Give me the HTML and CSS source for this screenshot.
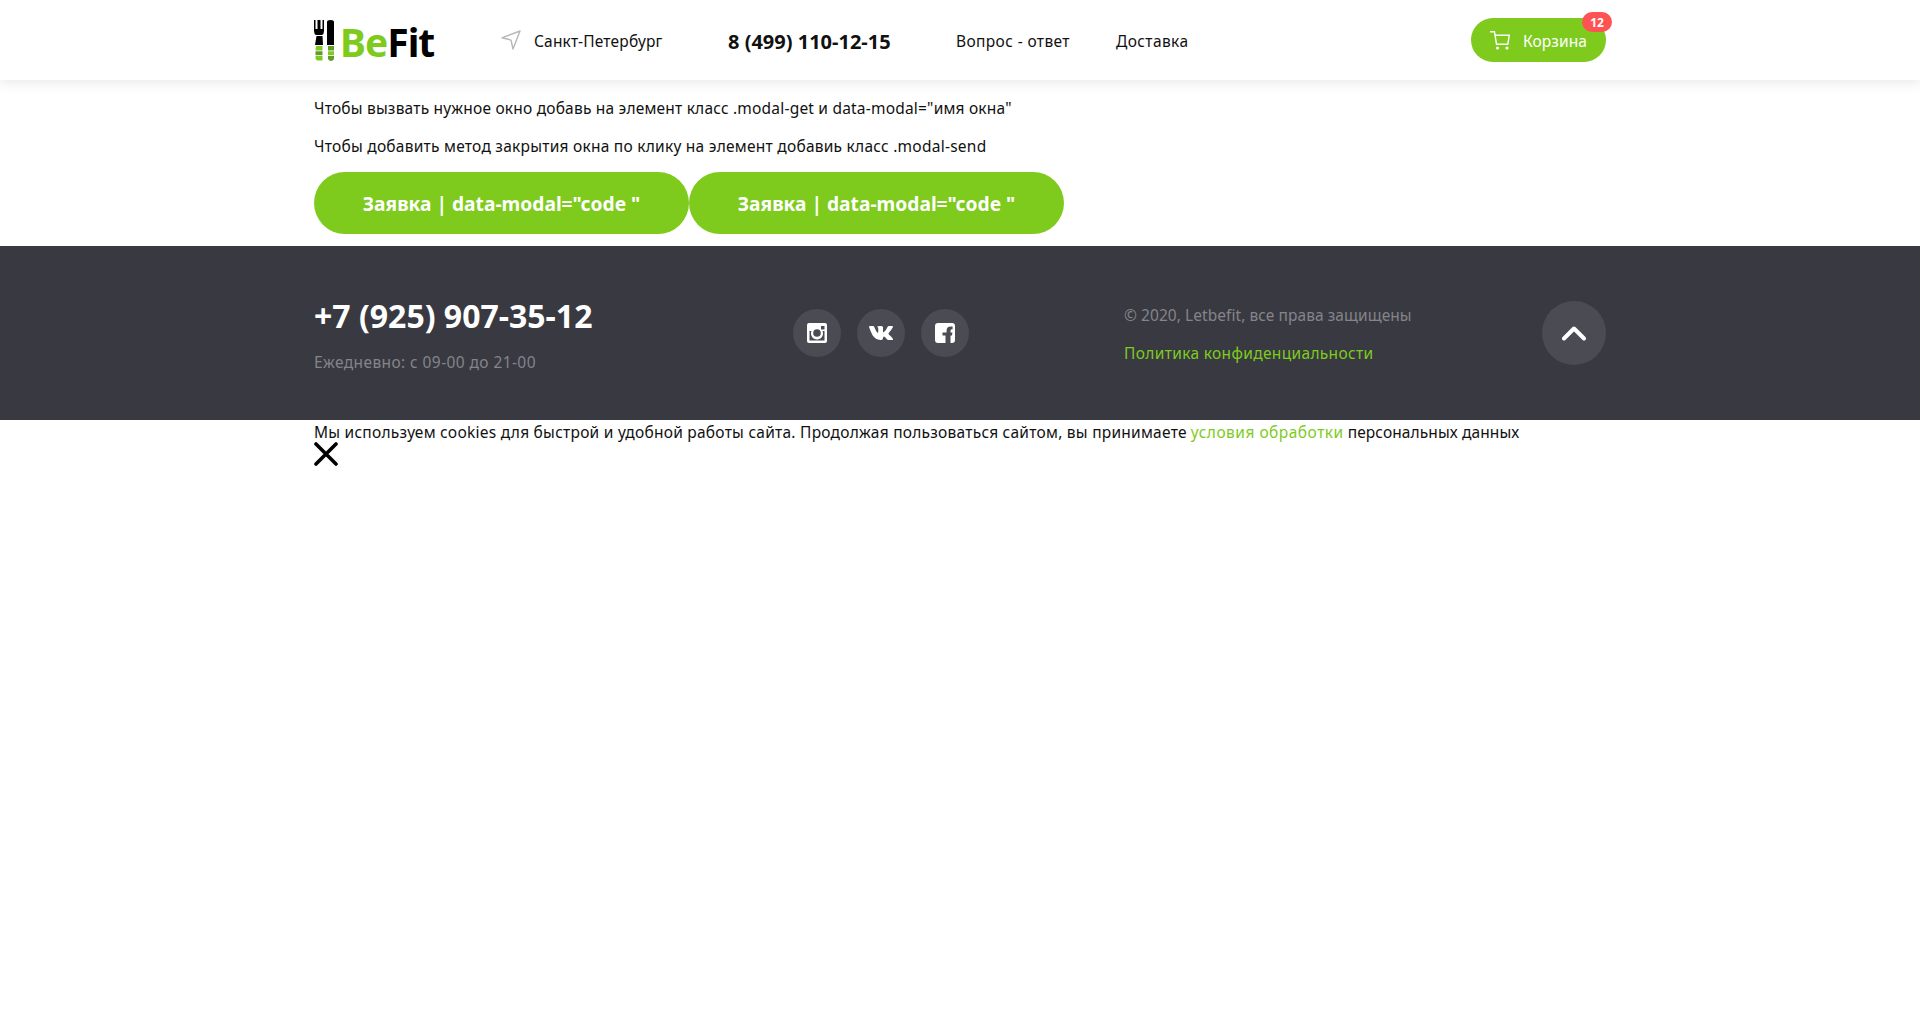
FILE: index.html
```html
<!DOCTYPE html>
<html lang="ru">
<head>
<meta charset="utf-8">
<title>BeFit</title>
<link rel="stylesheet" href="styles.css">
</head>
<body>
<header class="header">
  <div class="container header-row">
    <a class="logo">
      <svg class="logo-mark" width="20" height="41" viewBox="0 0 20 41">
        <path d="M0 0h1.500v9h2V0h3v9h2V0H10v11q0 3-2 4H2q-2-1-2-4z"/>
        <path d="M13 2q0-2 3.500-2T20 2v23h-7zM2.500 16h6l.5 9H1z"/>
        <path d="M2 26h6.500v4.500h-7zM1.500 36h7v4.500H4q-2 0-2.500-2zM14 31.200h6v4h-6z" fill="#7ecb1e"/>
        <path d="M1.500 31.200h7v4h-7zM14 26h6v4.500h-6zM14 36h6v3q-1 2-3 2t-3-2z" fill="#649a2c"/>
      </svg>
      <span class="logo-text"><span class="logo-be">Be</span>Fit</span>
    </a>
    <div class="city">
      <svg width="20" height="20" viewBox="0 0 20 20" fill="none" stroke="#b7b7b7" stroke-width="1.400" stroke-linejoin="round"><path d="M19 1 1 7.800l9 2.300L12 19z"/></svg>
      <span class="t city-name">Санкт-Петербург</span>
    </div>
    <a class="header-phone"><span class="t">8 (499) 110-12-15</span></a>
    <nav class="nav"><a class="t nav-faq">Вопрос - ответ</a><a class="t nav-delivery">Доставка</a></nav>
    <a class="cart">
      <svg width="20" height="19" viewBox="0 0 20 19" fill="none" stroke="#fff" stroke-width="1.400"><path d="M0 .8h4.500l2 12.400h11.300l1.500-9H5"/><circle cx="7.500" cy="17" r="1.600" fill="#fff" stroke="none"/><circle cx="17" cy="17" r="1.600" fill="#fff" stroke="none"/></svg>
      <span class="t cart-label">Корзина</span>
      <span class="badge">12</span>
    </a>
  </div>
</header>
<main class="container main">
  <p><span class="t p-one">Чтобы вызвать нужное окно добавь на элемент класс .modal-get и data-modal="имя окна"</span></p>
  <p><span class="t p-two">Чтобы добавить метод закрытия окна по клику на элемент добавиь класс .modal-send</span></p>
  <div class="buttons"><button class="btn"><span class="t">Заявка | data-modal="code "</span></button><button class="btn"><span class="t">Заявка | data-modal="code "</span></button></div>
</main>
<footer class="footer">
  <div class="container footer-row">
    <div class="contacts"><a class="footer-phone"><span class="t">+7 (925) 907-35-12</span></a><div class="hours"><span class="t">Ежедневно: с 09-00 до 21-00</span></div></div>
    <div class="social">
      <a class="circle"><svg width="20" height="20" viewBox="0 0 20 20"><path fill="#fff" fill-rule="evenodd" d="M2 0h16q2 0 2 2v16q0 2-2 2H2q-2 0-2-2V2q0-2 2-2zM14 3v3.500h3.500V3zM2.500 8v9.500h15V8h-2a6 6 0 1 1-11 0z"/><circle cx="10" cy="10" r="3.800" fill="#4b4b53"/></svg></a>
      <a class="circle"><svg width="24" height="14" viewBox="0 0 24 14"><path fill="#fff" d="M0 1q0-1 1-1h3q1 0 1.300 1 1.700 4.500 3.200 5.700.8.300.8-1V3q0-1.700-1.300-2.200Q9 0 11 0q3 0 3 1.200v4q0 1.600 1 .9Q17 4.500 18.500 1q.4-1 1.500-1h3q1.500 0 .7 1.500-1 2-4 5.500-.5.700.2 1.400 3 2.600 4 4.300.5 1.300-1 1.300h-3.400q-1 0-2-1.300-1.500-2-2.500-2.200-1 0-1 1.500 0 2-1.700 2-5.300.3-8.600-4.500Q2 6.500 0 1z"/></svg></a>
      <a class="circle"><svg width="20" height="20" viewBox="0 0 20 20"><path fill="#fff" d="M3 0h14q3 0 3 3v14q0 3-3 3h-1.500v-7.600H17l.4-3h-1.900V7.700q0-1.500 1.300-1.500h.8V3.400h-2q-4 0-4 4v2H7.500v3h3V20H3q-3 0-3-3V3q0-3 3-3z"/></svg></a>
    </div>
    <div class="legal"><div><span class="t copy">© 2020, Letbefit, все права защищены</span></div><a><span class="t policy">Политика конфиденциальности</span></a></div>
    <a class="circle up"><svg width="24" height="15" viewBox="0 0 24 15" fill="none" stroke="#fff" stroke-width="4" stroke-linecap="round" stroke-linejoin="round"><path d="m2 12.500 10-10 10 10"/></svg></a>
  </div>
</footer>
<div class="container cookies">
  <div class="cookies-text"><span class="t c-a">Мы используем cookies для быстрой и удобной работы сайта. Продолжая пользоваться сайтом, вы принимаете</span> <a class="t c-b">условия обработки</a> <span class="t c-c">персональных данных</span></div>
  <svg class="close" width="24" height="24" viewBox="0 0 24 24" stroke="#000" stroke-width="3.600" stroke-linecap="round"><path d="m2 2 20 20M22 2 2 22"/></svg>
</div>
</body>
</html>
```
FILE: styles.css
```css
* { box-sizing: border-box; }
body { margin: 0; font: 15.5px/19px "Noto Sans", sans-serif; color: #111; background: #fff; }
p { margin: 0; }
.t { white-space: nowrap; }
.container { width: 1292px; margin: 0 auto; }
.header { height: 80px; box-shadow: 0 2px 12px rgba(60,70,90,.13); }
.header-row { display: flex; align-items: center; height: 80px; }
.logo { display: flex; width: 187px; height: 41px; }
.logo-text { margin-left: 6px; font: 700 39px/44px "Noto Sans", sans-serif; color: #000; letter-spacing: -1px; }
.logo-be { color: #7ecb1e; }
.city { display: flex; align-items: center; width: 227px; gap: 13px; }
.city-name { padding-top: 2px; letter-spacing: .18px; }
.header-phone { width: 228px; padding-top: 2px; font-size: 20px; font-weight: 700; }
.nav { display: flex; padding-top: 2px; }
.nav-faq { width: 160px; letter-spacing: .38px; }
.nav-delivery { letter-spacing: .4px; }
.cart { position: relative; display: flex; align-items: center; gap: 13px; width: 135px; height: 44px; margin-left: auto; padding-left: 19px; border-radius: 22px; background: #7ecb1e; color: #fff; }
.cart-label { padding-top: 2px; letter-spacing: .1px; }
.badge { position: absolute; top: -6px; right: -6px; width: 30px; height: 20px; border-radius: 10px; background: #ff5252; font-size: 12px; font-weight: 700; line-height: 22px; text-align: center; }
.main { padding: 19px 0 12px; }
.main p { height: 19px; margin-bottom: 19px; }
.main p + p { margin-bottom: 16px; }
.p-one { letter-spacing: .203px; }
.p-two { letter-spacing: .25px; }
.buttons { display: flex; height: 62px; }
.btn { width: 375px; height: 62px; padding: 2px 0 0; border: 0; border-radius: 31px; background: #7ecb1e; color: #fff; font: 700 19.2px/24px "Noto Sans", sans-serif; }
.footer { height: 174px; background: #393941; color: #84848a; }
.footer-row { display: flex; align-items: center; height: 174px; }
.contacts { width: 479px; padding-top: 2px; }
.footer-phone { display: block; font-size: 32px; font-weight: 700; line-height: 38px; color: #fff; }
.hours { margin-top: 18px; letter-spacing: .41px; }
.social { display: flex; gap: 16px; width: 331px; }
.circle { display: flex; align-items: center; justify-content: center; width: 48px; height: 48px; border-radius: 50%; background: #4b4b53; }
.legal { padding-top: 2px; }
.legal div { margin-bottom: 19px; }
.copy { letter-spacing: .06px; }
.policy { letter-spacing: .34px; }
.policy, .c-b { color: #7ecb1e; }
.up { width: 64px; height: 64px; margin-left: auto; }
.cookies-text { padding-top: 3px; white-space: nowrap; }
.c-a { letter-spacing: .25px; }
.c-b { letter-spacing: .49px; }
.c-c { letter-spacing: .1px; }
.close { display: block; }
```
